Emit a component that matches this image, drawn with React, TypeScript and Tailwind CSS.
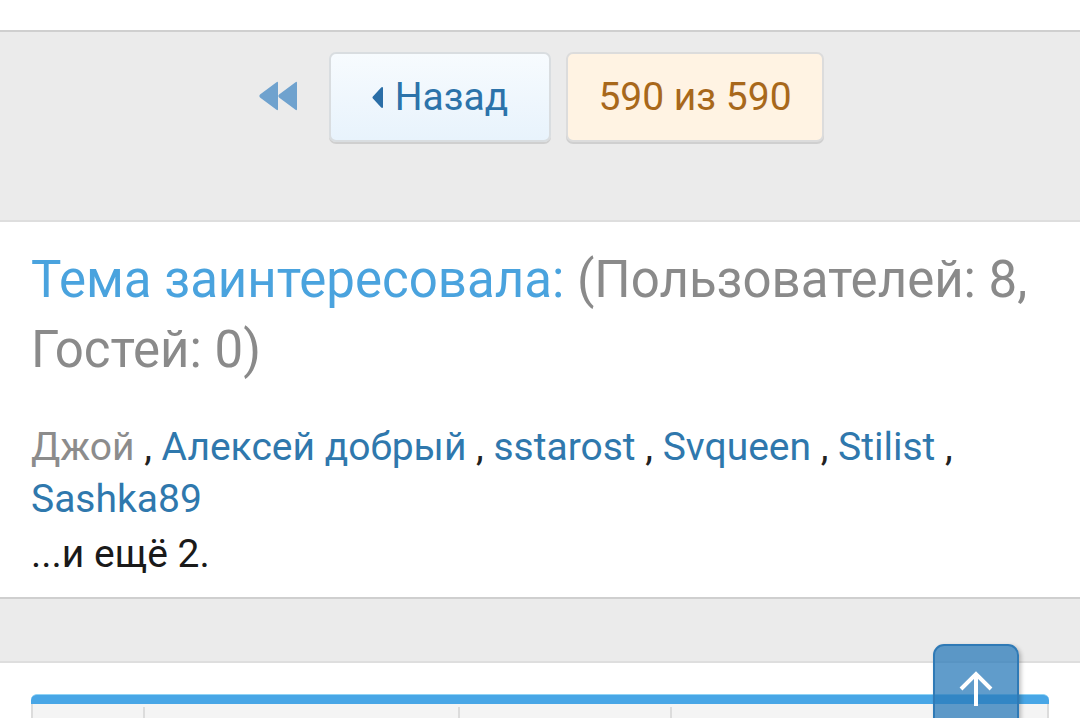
const font = { fontFamily: 'Roboto, "Noto Sans", sans-serif' }

function FirstIcon() {
  return (
    <svg width="40" height="30" viewBox="0 0 40 30" className="text-[#6fa2ce]">
      <path
        d="M20 2 Q20 0 18.5 1.2 L2 13.5 Q0.5 15 2 16.5 L18.5 28.8 Q20 30 20 28 Z"
        fill="currentColor"
      />
      <path
        d="M39 2 Q39 0 37.5 1.2 L21 13.5 Q19.5 15 21 16.5 L37.5 28.8 Q39 30 39 28 Z"
        fill="currentColor"
      />
    </svg>
  )
}

const users = ['Алексей добрый', 'sstarost', 'Svqueen', 'Stilist']

export default function App() {
  return (
    <div className="relative min-h-[718px] overflow-hidden bg-white" style={font}>
      <div className="h-[30px] bg-white" />

      {/* пагинация */}
      <div className="flex h-[192px] justify-center border-y-2 border-t-[#cfcfcf] border-b-[#dedede] bg-[#ebebeb] pt-[20px]">
        <div className="flex h-[90px] items-center">
          <a className="mr-[31px] flex items-center pb-[2px] pl-[2px]">
            <FirstIcon />
          </a>
          <a className="flex h-[90px] w-[222px] items-center justify-center rounded-[7px] border-2 border-[#d9dde0] bg-gradient-to-b from-[#f7fbfe] to-[#e8f3fc] text-[39px] text-[#2c73aa] shadow-[0_2px_0_#cfcfcf]">
            <svg width="11" height="21" viewBox="0 0 12 22" className="mr-[12px] text-[#2a6ea7]">
              <path d="M10 0 L1 10 Q0 11 1 12 L10 22 Q12 23 12 21 V1 Q12 -1 10 0 Z" fill="currentColor" />
            </svg>
            Назад
          </a>
          <span className="ml-[15px] flex h-[90px] w-[258px] items-center justify-center rounded-[7px] border-2 border-[#dcdcdc] bg-[#fff3e3] text-[39px] text-[#a8681b] shadow-[0_2px_0_#cfcfcf]">
            590 из 590
          </span>
        </div>
      </div>

      {/* кто смотрит тему */}
      <div className="px-[31px] pb-[17px] pt-[23px]">
        <div className="text-[51px] leading-[70px] text-[#8a8a8a]">
          <span className="text-[#4aa3de]">Тема заинтересовала:</span> (Пользователей: 8, Гостей: 0)
        </div>
        <div className="mt-[36px] text-[39px] leading-[52px] text-[#222]">
          <span className="text-[#8c8c8c]">Джой</span>
          {users.map((u) => (
            <span key={u}>
              {' , '}
              <a className="text-[#2f78ad]">{u}</a>
            </span>
          ))}
          {' , '}
          <a className="text-[#2f78ad]">Sashka89</a>
        </div>
        <div className="mt-[3px] text-[39px] leading-[52px] text-[#1a1a1a]">...и ещё 2.</div>
      </div>

      <div className="h-[66px] border-y-2 border-t-[#cfcfcf] border-b-[#dedede] bg-[#ebebeb]" />

      {/* таблица */}
      <div className="px-[31px] pt-[31px]">
        <div className="h-[10px] rounded-t-[6px] border-t border-[#8fd3f5] bg-[#48a6e6]" />
        <div className="grid h-[40px] grid-cols-[112px_315px_212px_1fr] border-x-2 border-[#dcdcdc] bg-[#f4f4f4]">
          <div className="mt-[3px] border-r-2 border-[#dcdcdc]" />
          <div className="mt-[3px] border-r-2 border-[#dcdcdc]" />
          <div className="mt-[3px] border-r-2 border-[#dcdcdc]" />
          <div />
        </div>
      </div>

      {/* наверх */}
      <a className="absolute left-[933px] top-[644px] flex h-[90px] w-[86px] justify-center rounded-t-[11px] border-2 border-[#2f7ab6] bg-[#2b7bba]/75 pt-[24px] shadow-[2px_2px_4px_rgba(0,0,0,0.25)]">
        <svg width="36" height="36" viewBox="0 0 36 36" fill="none" stroke="white" strokeWidth="4">
          <path d="M18 36 V4" />
          <path d="M3 19 L18 4 L33 19" />
        </svg>
      </a>
    </div>
  )
}
